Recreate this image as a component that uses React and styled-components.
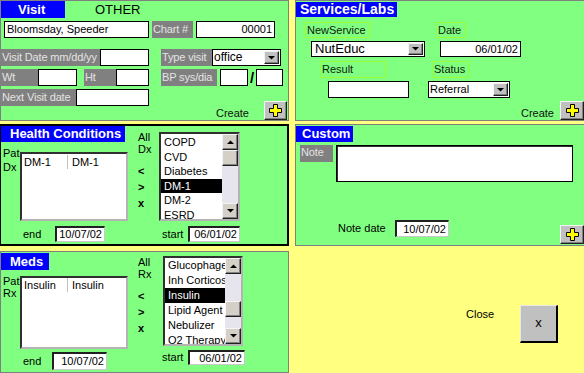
import React from "react";
import styled, { createGlobalStyle } from "styled-components";

const GlobalStyle = createGlobalStyle`
  *, *::before, *::after { box-sizing: border-box; }
  html, body { margin: 0; padding: 0; background: #ffff80; overflow: hidden; }
  body { font-family: "Liberation Sans", Arial, sans-serif; font-size: 11px; color: #000; }
`;

const Page = styled.div`
  display: grid;
  grid-template-columns: 289px 290px;
  column-gap: 6px;
  width: 584px;
  height: 373px;
  overflow: hidden;
  align-items: start;
`;

const Panel = styled.section`
  background: #80ff80;
  height: ${(p) => p.$h}px;
  margin-top: ${(p) => p.$mt || 0}px;
  border: 1px solid ${(p) => (p.$dark ? "#000" : "#808080")};
  ${(p) => p.$dark && "border-width: 2px 2px 2px 1px;"}
  display: flex;
  flex-direction: column;
  overflow: hidden;
`;

const SplitPanel = styled(Panel)`
  display: grid;
  grid-template-columns: 129px 29px 1fr;
  align-items: start;
`;

const Col = styled.div`
  display: flex;
  flex-direction: column;
`;

const Title = styled.div`
  width: ${(p) => p.$w}px;
  height: ${(p) => p.$h}px;
  margin-top: ${(p) => p.$mt || 0}px;
  padding-left: ${(p) => p.$pl || 0}px;
  background: #0000ff;
  color: #fff;
  font-weight: bold;
  font-size: ${(p) => p.$fs || 13}px;
  line-height: ${(p) => p.$h}px;
  white-space: nowrap;
  flex-shrink: 0;
`;

const Heading = styled.div`
  margin-left: 30px;
  font-size: 13px;
  line-height: 17px;
`;

const Row = styled.div`
  display: flex;
  align-items: flex-start;
  margin-top: ${(p) => p.$mt || 0}px;
  ${(p) => (p.$h ? `height: ${p.$h}px;` : "")}
  flex-shrink: 0;
`;

const Footer = styled(Row)`
  justify-content: flex-end;
  height: 19px;
`;

const GrayLabel = styled.div`
  width: ${(p) => p.$w}px;
  height: ${(p) => p.$h || 17}px;
  margin-left: ${(p) => p.$ml || 0}px;
  background: #808080;
  color: #e4e4e4;
  line-height: ${(p) => p.$lh || p.$h || 17}px;
  padding-left: 1px;
  letter-spacing: -0.15px;
  white-space: nowrap;
  overflow: hidden;
  flex-shrink: 0;
`;

const OutlineLabel = styled.div`
  width: ${(p) => p.$w}px;
  height: ${(p) => p.$h || 17}px;
  margin-left: ${(p) => p.$ml || 0}px;
  border: 1px solid #99ff33;
  line-height: ${(p) => (p.$h || 17) - 2}px;
  padding-left: 1px;
  color: #102010;
  white-space: nowrap;
  flex-shrink: 0;
`;

const TextBox = styled.div`
  width: ${(p) => p.$w}px;
  height: ${(p) => p.$h || 17}px;
  margin-left: ${(p) => p.$ml || 0}px;
  background: #fff;
  border: 1px solid #000;
  ${(p) =>
    p.$sunken &&
    "border-width: 2px 1px 1px 2px; border-color: #202020 #c8c8c8 #c8c8c8 #202020;"}
  line-height: ${(p) => (p.$h || 17) - (p.$sunken ? 3 : 2)}px;
  text-align: ${(p) => (p.$right ? "right" : "left")};
  padding: 0 2px;
  white-space: nowrap;
  overflow: hidden;
  flex-shrink: 0;
`;

const NoteArea = styled.div`
  width: ${(p) => p.$w}px;
  height: ${(p) => p.$h}px;
  margin-left: ${(p) => p.$ml || 0}px;
  background: #fff;
  border: 1px solid #000;
  box-shadow: inset 1px 1px 0 #303030;
`;

const SelectBox = styled.div`
  display: flex;
  width: ${(p) => p.$w}px;
  height: ${(p) => p.$h || 17}px;
  margin-left: ${(p) => p.$ml || 0}px;
  background: #fff;
  border: 1px solid #000;
  font-size: ${(p) => p.$fs || 11}px;
  flex-shrink: 0;
`;

const SelectText = styled.span`
  flex: 1;
  padding-left: ${(p) => p.$pl || 1}px;
  line-height: ${(p) => (p.$h || 17) - 2}px;
  white-space: nowrap;
  overflow: hidden;
`;

const Raised = `
  background: #c0c0c0;
  border: 1px solid;
  border-color: #f4f4f4 #202020 #202020 #f4f4f4;
  box-shadow: inset -1px -1px 0 #808080;
  display: flex;
  align-items: center;
  justify-content: center;
`;

const DropButton = styled.span`
  ${Raised}
  width: 15px;
  margin: 1px 1px 1px 0;
`;

const PlusBtn = styled.div`
  ${Raised}
  width: ${(p) => p.$w}px;
  height: 19px;
  margin-left: ${(p) => p.$ml || 0}px;
  margin-right: ${(p) => p.$mr || 0}px;
  margin-top: ${(p) => p.$mt || 0}px;
  flex-shrink: 0;
`;

const CreateText = styled.span`
  line-height: 13px;
  margin-top: 6px;
  color: #101010;
`;

const PlainText = styled.div`
  width: ${(p) => (p.$w ? `${p.$w}px` : "auto")};
  margin-left: ${(p) => p.$ml || 0}px;
  margin-top: ${(p) => p.$mt || 0}px;
  line-height: ${(p) => p.$lh || 16}px;
  white-space: nowrap;
  flex-shrink: 0;
`;

const Slash = styled.span`
  width: 8px;
  text-align: center;
  font-weight: bold;
  font-size: 15px;
  line-height: 17px;
`;

const SideLabel = styled.div`
  width: 19px;
  padding-left: 2px;
  line-height: ${(p) => p.$lh}px;
  overflow: hidden;
  flex-shrink: 0;
`;

const MidCol = styled.div`
  display: flex;
  flex-direction: column;
  padding-left: 8px;
`;

const SideText = styled.div`
  margin-top: ${(p) => p.$mt}px;
  line-height: 12px;
`;

const Arrows = styled.div`
  margin-top: ${(p) => p.$mt}px;
  font-weight: bold;
  line-height: 16px;
  display: flex;
  flex-direction: column;
`;

const ListFrame = styled.div`
  width: ${(p) => p.$w}px;
  height: ${(p) => p.$h}px;
  margin-top: ${(p) => p.$mt || 0}px;
  margin-left: ${(p) => p.$ml || 0}px;
  background: #fff;
  border: 2px solid;
  border-color: #303030 #b4b4b4 #b4b4b4 #303030;
  display: flex;
  overflow: hidden;
  flex-shrink: 0;
`;

const ListItems = styled.div`
  flex: 1;
  padding-top: ${(p) => p.$pt || 0}px;
  overflow: hidden;
`;

const ListItem = styled.div`
  height: ${(p) => p.$lh}px;
  line-height: ${(p) => p.$lh}px;
  padding-left: 3px;
  white-space: nowrap;
  overflow: hidden;
  background: ${(p) => (p.$sel ? "#000" : "transparent")};
  color: ${(p) => (p.$sel ? "#fff" : "#000")};
`;

const PatRow = styled.div`
  display: flex;
  height: 14px;
  margin-top: ${(p) => p.$mt || 0}px;
  line-height: 14px;
`;

const PatCell = styled.div`
  width: ${(p) => (p.$w ? `${p.$w}px` : "auto")};
  padding-left: ${(p) => p.$pl}px;
  ${(p) => p.$sep && "border-right: 1px solid #c0c0c0;"}
`;

const Scrollbar = styled.div`
  width: 16px;
  display: flex;
  flex-direction: column;
  background: #e6e4ec;
`;

const ScrollBtn = styled.div`
  ${Raised}
  background: #d4d0c8;
  height: 16px;
  flex-shrink: 0;
`;

const Track = styled.div`
  flex: 1;
`;

const Thumb = styled.div`
  ${Raised}
  background: #d4d0c8;
  height: 16px;
  margin-top: ${(p) => p.$top}px;
`;

const Spacer = styled.div`
  flex: 1;
`;

const CloseArea = styled.div`
  display: flex;
  align-items: flex-start;
  margin-top: 5px;
  height: 122px;
`;

const CloseBtn = styled.div`
  ${Raised}
  width: 38px;
  height: 38px;
  margin-top: 54px;
  border-width: 1px 2px 2px 1px;
  border-color: #e8e8e8 #000 #000 #e8e8e8;
  box-shadow: none;
  font-size: 13px;
  line-height: 13px;
  padding-bottom: 2px;
`;

const Tri = ({ up }) => (
  <svg width="7" height="4" viewBox="0 0 7 4">
    <polygon points={up ? "0,4 7,4 3.5,0.5" : "0,0 7,0 3.5,3.5"} fill="#000" />
  </svg>
);

const Dropdown = ({ value, $w, $h = 17, $ml, $fs, $pl }) => (
  <SelectBox $w={$w} $h={$h} $ml={$ml} $fs={$fs}>
    <SelectText $h={$h} $pl={$pl}>{value}</SelectText>
    <DropButton>
      <Tri />
    </DropButton>
  </SelectBox>
);

const PlusButton = (props) => (
  <PlusBtn {...props}>
    <svg width="13" height="13" viewBox="0 0 13 13">
      <polygon
        points="4.5,0.5 8.5,0.5 8.5,4.5 12.5,4.5 12.5,8.5 8.5,8.5 8.5,12.5 4.5,12.5 4.5,8.5 0.5,8.5 0.5,4.5 4.5,4.5"
        fill="#ffff00"
        stroke="#000"
        strokeWidth="1"
      />
    </svg>
  </PlusBtn>
);

const PickList = ({ items, selected, lh, pt, thumbTop, ...frame }) => (
  <ListFrame {...frame}>
    <ListItems $pt={pt}>
      {items.map((it) => (
        <ListItem key={it} $lh={lh} $sel={it === selected}>
          {it}
        </ListItem>
      ))}
    </ListItems>
    <Scrollbar>
      <ScrollBtn>
        <Tri up />
      </ScrollBtn>
      <Track>
        <Thumb $top={thumbTop} />
      </Track>
      <ScrollBtn>
        <Tri />
      </ScrollBtn>
    </Scrollbar>
  </ListFrame>
);

const ArrowStack = ({ mt }) => (
  <Arrows $mt={mt}>
    <span>&lt;</span>
    <span>&gt;</span>
    <span>x</span>
  </Arrows>
);

export default function App() {
  return (
    <>
      <GlobalStyle />
      <Page>
        <Panel $h={121}>
          <Row $h={17}>
            <Title $w={64} $h={17} $pl={17}>Visit</Title>
            <Heading>OTHER</Heading>
          </Row>
          <Row $mt={3} $h={17}>
            <TextBox $w={145} $ml={3}>Bloomsday, Speeder</TextBox>
            <GrayLabel $w={41} $ml={3}>Chart #</GrayLabel>
            <TextBox $w={79} $ml={3} $right>00001</TextBox>
          </Row>
          <Row $mt={11} $h={17}>
            <GrayLabel $w={99}>Visit Date mm/dd/yy</GrayLabel>
            <TextBox $w={49} />
            <GrayLabel $w={51} $ml={12}>Type visit</GrayLabel>
            <Dropdown $w={69} $fs={12} value="office" />
          </Row>
          <Row $mt={3} $h={17}>
            <GrayLabel $w={37}>Wt</GrayLabel>
            <TextBox $w={39} />
            <GrayLabel $w={32} $ml={7}>Ht</GrayLabel>
            <TextBox $w={33} />
            <GrayLabel $w={56} $ml={12}>BP sys/dia</GrayLabel>
            <TextBox $w={28} $ml={3} />
            <Slash>/</Slash>
            <TextBox $w={27} />
          </Row>
          <Row $mt={3} $h={17}>
            <GrayLabel $w={75}>Next Visit date</GrayLabel>
            <TextBox $w={73} />
          </Row>
          <Footer $mt={-5}>
            <CreateText>Create</CreateText>
            <PlusButton $w={23} $ml={15} $mr={1} />
          </Footer>
        </Panel>

        <Panel $h={121}>
          <Title $w={101} $h={15} $mt={1} $pl={4} $fs={14}>Services/Labs</Title>
          <Row $mt={5} $h={16}>
            <OutlineLabel $w={65} $h={16} $ml={9}>NewService</OutlineLabel>
            <OutlineLabel $w={29} $h={16} $ml={66}>Date</OutlineLabel>
          </Row>
          <Row $mt={3} $h={16}>
            <Dropdown $w={114} $h={16} $ml={15} $fs={13} $pl={3} value="NutEduc" />
            <TextBox $w={81} $h={16} $ml={15} $right>06/01/02</TextBox>
          </Row>
          <Row $mt={4} $h={17}>
            <OutlineLabel $w={66} $ml={24}>Result</OutlineLabel>
            <OutlineLabel $w={37} $ml={46}>Status</OutlineLabel>
          </Row>
          <Row $mt={3} $h={17}>
            <TextBox $w={81} $ml={32} />
            <Dropdown $w={82} $ml={19} value="Referral" />
          </Row>
          <Footer $mt={3}>
            <CreateText>Create</CreateText>
            <PlusButton $w={24} $ml={6} />
          </Footer>
        </Panel>

        <SplitPanel $h={122} $mt={3} $dark>
          <Col>
            <Title $w={124} $h={16} $pl={9}>Health Conditions</Title>
            <Row $mt={4}>
              <SideLabel $lh={14}>
                Pat
                <br />
                Dx
              </SideLabel>
              <ListFrame $w={108} $h={69} $mt={6}>
                <ListItems>
                  <PatRow $mt={1}>
                    <PatCell $w={46} $pl={2} $sep>DM-1</PatCell>
                    <PatCell $pl={4}>DM-1</PatCell>
                  </PatRow>
                </ListItems>
              </ListFrame>
            </Row>
            <Row $mt={5} $h={16}>
              <PlainText $ml={22} $w={32}>end</PlainText>
              <TextBox $w={50} $h={16} $sunken $right>10/07/02</TextBox>
            </Row>
          </Col>
          <MidCol>
            <SideText $mt={5}>
              All
              <br />
              Dx
            </SideText>
            <ArrowStack mt={8} />
          </MidCol>
          <Col>
            <PickList
              $w={81}
              $h={89}
              $mt={6}
              lh={14.6}
              pt={1}
              thumbTop={0}
              items={["COPD", "CVD", "Diabetes", "DM-1", "DM-2", "ESRD"]}
              selected="DM-1"
            />
            <Row $mt={5} $h={16}>
              <PlainText $ml={3} $w={26}>start</PlainText>
              <TextBox $w={52} $h={16} $sunken $right>06/01/02</TextBox>
            </Row>
          </Col>
        </SplitPanel>

        <Panel $h={122} $mt={3}>
          <Title $w={57} $h={16} $mt={1} $pl={6}>Custom</Title>
          <Row $mt={3}>
            <GrayLabel $w={33} $ml={4} $lh={15}>Note</GrayLabel>
            <NoteArea $w={237} $h={37} $ml={3} />
          </Row>
          <Row $mt={38}>
            <PlainText $ml={42} $w={57} $lh={17}>Note date</PlainText>
            <TextBox $w={54} $h={17} $sunken $right>10/07/02</TextBox>
            <Spacer />
            <PlusButton $w={24} $mt={5} />
          </Row>
        </Panel>

        <SplitPanel $h={122} $mt={5}>
          <Col>
            <Title $w={48} $h={17} $mt={1} $pl={9}>Meds</Title>
            <Row $mt={5}>
              <SideLabel $lh={12}>
                Pat
                <br />
                Rx
              </SideLabel>
              <ListFrame $w={108} $h={73} $mt={1}>
                <ListItems>
                  <PatRow>
                    <PatCell $w={46} $pl={2} $sep>Insulin</PatCell>
                    <PatCell $pl={4}>Insulin</PatCell>
                  </PatRow>
                </ListItems>
              </ListFrame>
            </Row>
            <Row $mt={3} $h={18}>
              <PlainText $ml={22} $w={29} $lh={18}>end</PlainText>
              <TextBox $w={55} $h={18} $sunken $right>10/07/02</TextBox>
            </Row>
          </Col>
          <MidCol>
            <SideText $mt={4}>
              All
              <br />
              Rx
            </SideText>
            <ArrowStack mt={8} />
          </MidCol>
          <Col>
            <PickList
              $w={80}
              $h={90}
              $mt={4}
              $ml={4}
              lh={15}
              pt={0}
              thumbTop={27}
              items={["Glucophage", "Inh Corticost", "Insulin", "Lipid Agent", "Nebulizer", "O2 Therapy"]}
              selected="Insulin"
            />
            <Row $mt={4} $h={15}>
              <PlainText $ml={3} $w={26} $lh={15}>start</PlainText>
              <TextBox $w={57} $h={15} $sunken $right>06/01/02</TextBox>
            </Row>
          </Col>
        </SplitPanel>

        <CloseArea>
          <PlainText $ml={171} $w={54} $mt={56} $lh={14}>Close</PlainText>
          <CloseBtn>x</CloseBtn>
        </CloseArea>
      </Page>
    </>
  );
}
